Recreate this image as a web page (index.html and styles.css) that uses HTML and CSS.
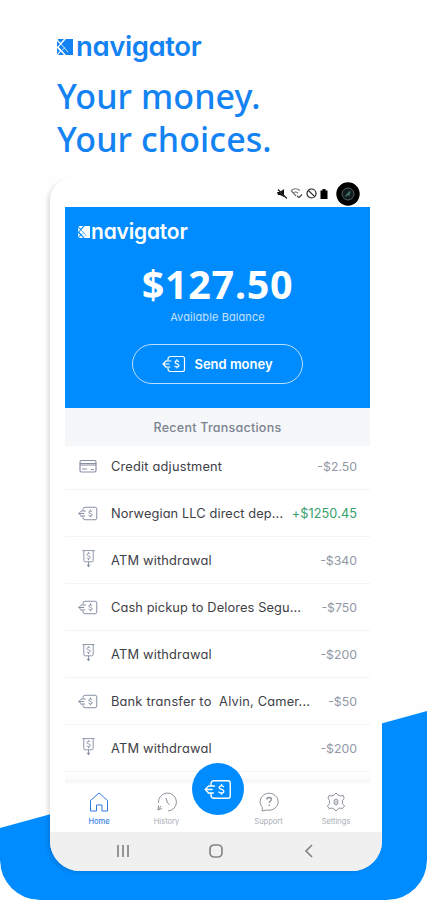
FILE: index.html
```html
<!DOCTYPE html>
<html lang="en">
<head>
<meta charset="utf-8">
<title>Navigator</title>
<link rel="stylesheet" href="styles.css">
</head>
<body>
<svg class="defs" width="0" height="0" aria-hidden="true">
  <symbol id="mark" viewBox="0 0 16 16">
    <path fill="currentColor" d="M1 0H7L3.600 3.800L1 1.200ZM0 2L3 5L0 8ZM9 0H16V16H9L1.800 8ZM0 9L3 12L0 15ZM3.800 12.600L7 16H1Z"/>
    <path fill="none" stroke="var(--mark-line)" stroke-width=".8" d="M3.500 4.500L11 13M5 11.500L8 8.500"/>
  </symbol>
  <symbol id="cash" viewBox="0 0 24 18">
    <g fill="none" stroke="currentColor" stroke-width="1.200" stroke-linecap="round" stroke-linejoin="round">
      <path d="M6 5V4a2.500 2.500 0 0 1 2.500-2.500h12A2 2 0 0 1 22.500 3.500v11a2 2 0 0 1-2 2h-12A2.500 2.500 0 0 1 6 14v-1M9 6H4.500M7 9H1M8 12H3.500M4 6L1 9L4 12"/>
      <path d="M16.700 6.500c-.6-.8-3.700-1-3.700.8 0 2 4 1.200 4 3.200 0 1.900-3.400 1.700-4.200.7M15 4.700v1M15 12v1"/>
    </g>
  </symbol>
  <symbol id="card" viewBox="0 0 18 14">
    <g fill="none" stroke="currentColor" stroke-width="1.200">
      <rect x="1" y="1.500" width="16" height="11.500" rx="1.500"/>
      <path d="M1 4.500H17M1 6H17M3 10H8M12 10.500H15"/>
    </g>
  </symbol>
  <symbol id="atm" viewBox="0 0 16 20">
    <g fill="none" stroke="currentColor">
      <path d="M1.500 1H14.500M3 1V11.500a1.500 1.500 0 0 0 1.500 1.500H11.500a1.500 1.500 0 0 0 1.500-1.500V1M8 13V17"/>
      <path d="M9.800 4.500c-.6-.8-3.500-.9-3.500.8s3.600 1 3.600 2.800-3 1.600-3.800.7M8 2.800V4M8 10v1.300"/>
    </g>
    <path fill="currentColor" d="M6 16H10L8 19Z"/>
  </symbol>
</svg>

<main class="poster">
  <svg class="backdrop" viewBox="0 0 427 200" aria-hidden="true"><path fill="#008cff" d="M0 128L427 11V162Q427 200 387 200H40Q2 200 0 162Z"/></svg>

  <header class="intro">
    <div class="brand"><svg class="brand-mark"><use href="#mark"/></svg><span>navigator</span></div>
    <h1>Your money.<br>Your choices.</h1>
  </header>

  <section class="phone">
    <div class="status">
      <svg width="10" height="10" viewBox="0 0 10 10"><path fill="#111" d="M0 3H3L7 0V8L3 6H1Z"/><path stroke="#fff" d="M0 0L10 10"/><path stroke="#111" stroke-width="1.200" d="M1 .5L10 9.500"/></svg>
      <svg width="13" height="11" viewBox="0 0 13 11"><g fill="none" stroke="#777" stroke-width="1.200"><path d="M1 2.500Q5.500-1 10 2.500M3 5Q5.500 3 8 5M1 2.500L6 8"/><path stroke="#444" d="M7 8L9 9.500L12 6.500"/></g></svg>
      <svg width="11" height="11" viewBox="0 0 11 11"><g fill="none" stroke="#222" stroke-width="1.200"><circle cx="5.500" cy="5.500" r="4.500"/><path d="M2.300 2.300L8.700 8.700"/></g></svg>
      <svg width="8" height="10" viewBox="0 0 8 10"><path fill="#000" d="M2.500 0H5.500V1.500H7.500V10H.5V1.500H2.500Z"/></svg>
      <svg class="camera" width="24" height="24" viewBox="0 0 24 24"><circle cx="12" cy="12" r="11.700" fill="#000"/><circle cx="12" cy="12" r="6" fill="#111a1c" stroke="#536062"/><path fill="none" stroke="#42716c" stroke-width="1.300" d="M9.500 14.500L14 9.500L12.500 14"/></svg>
    </div>

    <div class="screen">
      <div class="hero">
        <div class="brand small"><svg class="brand-mark"><use href="#mark"/></svg><span>navigator</span></div>
        <div class="balance">$127.50</div>
        <div class="balance-label">Available Balance</div>
        <button class="send"><svg width="24" height="18"><use href="#cash"/></svg><span>Send money</span></button>
      </div>
      <h2>Recent Transactions</h2>
      <ul class="list">
        <li><svg class="card-icon"><use href="#card"/></svg><span class="name">Credit adjustment</span><span class="amount">-$2.50</span></li>
        <li><svg class="cash-icon"><use href="#cash"/></svg><span class="name long">Norwegian LLC direct dep...</span><span class="amount plus">+$1250.45</span></li>
        <li><svg class="atm-icon"><use href="#atm"/></svg><span class="name">ATM withdrawal</span><span class="amount">-$340</span></li>
        <li><svg class="cash-icon"><use href="#cash"/></svg><span class="name long">Cash pickup to Delores Segu...</span><span class="amount">-$750</span></li>
        <li><svg class="atm-icon"><use href="#atm"/></svg><span class="name">ATM withdrawal</span><span class="amount">-$200</span></li>
        <li><svg class="cash-icon"><use href="#cash"/></svg><span class="name">Bank transfer to&nbsp; Alvin, Camer...</span><span class="amount">-$50</span></li>
        <li><svg class="atm-icon"><use href="#atm"/></svg><span class="name">ATM withdrawal</span><span class="amount">-$200</span></li>
      </ul>
      <nav class="tabs">
        <div class="tab active"><svg viewBox="0 0 20 20"><path d="M1.500 8.500L10 1L18.500 8.500V19H13V13H7.500V19H1.500Z"/></svg><span>Home</span></div>
        <div class="tab"><svg viewBox="0 0 20 20"><path d="M1.500 13.500L1 18L5 16.500M1 18L4 14M1.500 11A9 9 0 1 1 11 19M9 6L10.500 11L12.500 12.500"/></svg><span>History</span></div>
        <div class="fab"><svg width="28" height="21"><use href="#cash"/></svg></div>
        <div class="tab"><svg viewBox="0 0 20 20"><path d="M3.500 15.500A9 8.500 0 1 1 8 18L3 19Z"/><path class="strong" d="M7.500 7.500Q8 5.500 10.200 5.500Q12.500 5.700 12.500 7.500C12.500 9 10.200 9 10.200 11M10.200 12.500V14"/></svg><span>Support</span></div>
        <div class="tab"><svg viewBox="0 0 20 20"><path d="M8 3L10 1L12 3L14 4L17.500 3.500L18 6.500L16.500 8.500V11.500L18.500 14L16.500 16.500L13.500 16L12 17L10 19L8 17L6 16L3 16.500L1.500 14L3.500 11.500V8.500L2 6L3 3.500L6 4Z"/><ellipse cx="10" cy="10" rx="2" ry="3"/><path d="M10 8.500V11.500"/></svg><span>Settings</span></div>
      </nav>
    </div>

    <div class="system">
      <svg width="14" height="14" viewBox="0 0 14 14"><path d="M2 1V13M7 1V13M12 1V13"/></svg>
      <svg width="14" height="14" viewBox="0 0 14 14"><rect x="1" y="1" width="12" height="12" rx="4"/></svg>
      <svg width="14" height="14" viewBox="0 0 14 14"><path d="M10 1L4 7L10 13"/></svg>
    </div>
  </section>
</main>
</body>
</html>
```
FILE: styles.css
```css
* { box-sizing: border-box; margin: 0; padding: 0; }
body {
  background: #fff;
  font-family: Inter, "Noto Sans", sans-serif;
  font-feature-settings: "cv11" 1;
  --blue: #008cff;
}
.defs { position: absolute; }
.poster { position: relative; width: 427px; height: 900px; overflow: hidden; background: #fefefe; border-radius: 40px; }
.backdrop { position: absolute; left: 0; bottom: 0; width: 427px; height: 200px; }
.intro { height: 178px; padding: 31px 0 0 57px; color: #1382f2; white-space: nowrap; }
.brand { display: flex; align-items: center; gap: 3px; height: 30px; font-size: 27.5px; font-weight: 600; letter-spacing: -.4px; --mark-line: #fff; }
.brand-mark { width: 16px; height: 16px; margin-top: 2px; }
h1 { margin-top: 14px; font: 500 34px/43px "Noto Sans", sans-serif; letter-spacing: .1px; }

.phone {
  position: relative; display: flex; flex-direction: column;
  width: 332px; height: 693px; margin-left: 50px;
  background: #fff; border-radius: 22px 22px 30px 30px;
  box-shadow: -3px 2px 4px -1px rgba(0, 0, 0, .14);
}
.status { display: flex; align-items: center; justify-content: flex-end; gap: 3px; height: 29px; padding: 2px 22px 0 0; }
.camera { margin-left: 5px; }
.screen { width: 305px; margin-left: 15px; }
.hero { display: flex; flex-direction: column; align-items: center; height: 201px; background: var(--blue); color: #fff; }
.brand.small { align-self: flex-start; gap: 1px; height: 24px; margin: 12px 0 0 13px; font-size: 21px; letter-spacing: -.2px; --mark-line: var(--blue); }
.small .brand-mark { width: 12px; height: 12px; }
.balance { height: 44px; margin-top: 19px; font: 700 39.5px/44px "Noto Sans", sans-serif; letter-spacing: .7px; }
.balance-label { height: 16px; margin-top: 3px; font-size: 11px; line-height: 16px; letter-spacing: .1px; opacity: .75; }
.send { display: flex; align-items: center; justify-content: center; gap: 8px; width: 171px; height: 40px; margin-top: 19px; border: 1px solid #b9e0ff; border-radius: 20px; background: none; color: #fff; font: 600 13px Inter, sans-serif; }
h2 { height: 38px; background: #f5f7f9; color: #7b8290; font-size: 12.5px; line-height: 39px; font-weight: 500; letter-spacing: .25px; text-align: center; }
.list { list-style: none; }
.list li { display: flex; align-items: center; height: 47px; padding: 0 13px; border-bottom: 1px solid #f3f4f5; color: #8690a4; }
.list li:first-child { height: 44px; padding-bottom: 3px; }
.list svg { flex: none; }
.card-icon { width: 18px; height: 14px; margin: 0 14px 0 1px; }
.cash-icon { width: 20px; height: 15px; margin-right: 13px; }
.atm-icon { width: 15px; height: 20px; margin: -3px 15px 0 3px; }
.name { color: #3d4046; font-size: 12.8px; letter-spacing: .2px; white-space: nowrap; }
.name.long { letter-spacing: .11px; }
.amount { margin-left: auto; font-size: 12.3px; color: #9298a6; white-space: nowrap; }
.plus { font-size: 12.7px; letter-spacing: .1px; color: #35a06b; }
.tabs { display: grid; grid-template-columns: 68px 67px 35px 67px 68px; height: 60px; padding-top: 20px; background: linear-gradient(#fff 0, #fff 3px, #f6f6f6 10px, #fff 12px); }
.tab { display: flex; flex-direction: column; align-items: center; gap: 4px; color: #a6abb5; font-size: 7.5px; line-height: 12px; }
.tab svg { width: 20px; height: 20px; fill: none; stroke: #8d929a; stroke-width: 1; }
.tab .strong { stroke-width: 1.3; }
.tab.active { color: #3a84e4; font-weight: 500; }
.tab.active svg { stroke: #3478e4; }
.fab { position: relative; display: flex; align-items: center; justify-content: center; justify-self: center; width: 52px; height: 52px; margin-top: -29px; border-radius: 50%; background: var(--blue); color: #fff; }
.system { display: flex; justify-content: space-around; align-items: center; flex: 1; padding: 0 27px 1px; border-radius: 0 0 30px 30px; background: #f0f0f0; }
.system svg { fill: none; stroke: #858585; stroke-width: 1.7; }
```
